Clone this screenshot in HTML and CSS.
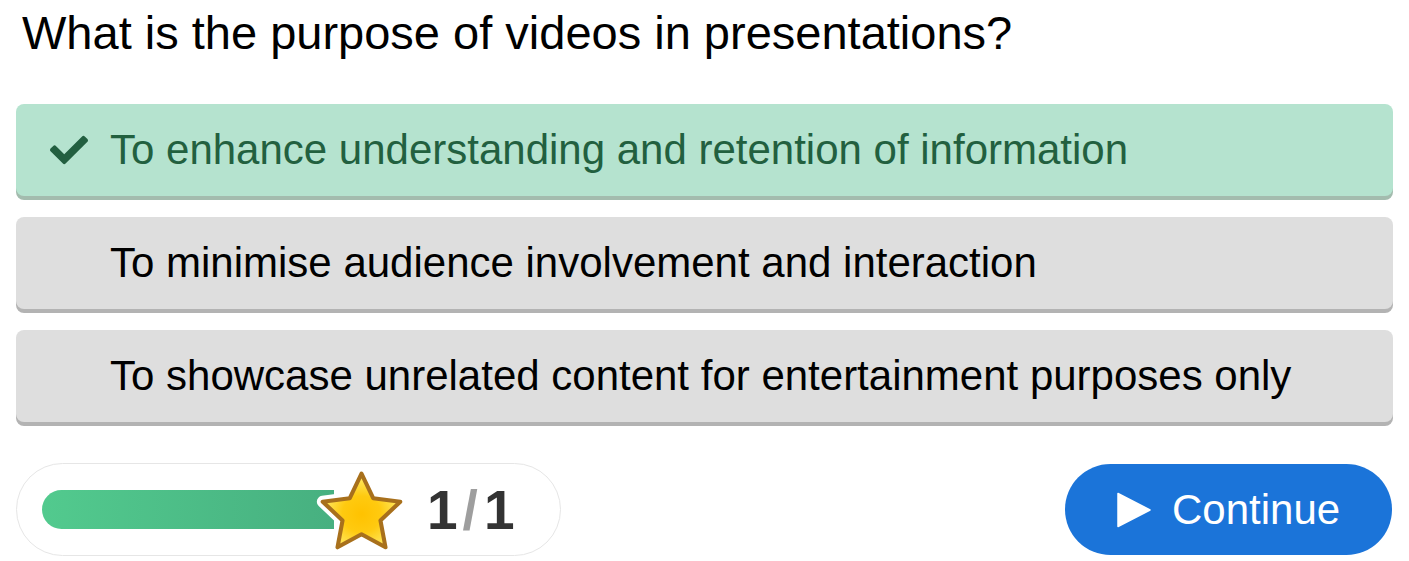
FILE: index.html
```html
<!DOCTYPE html>
<html lang="en">
<head>
<meta charset="utf-8">
<title>Quiz</title>
<link rel="stylesheet" href="styles.css">
</head>
<body>
<main class="page">
  <h1 class="question">What is the purpose of videos in presentations?</h1>
  <div class="options">
    <div class="option correct">
      <span class="opt-icon">
        <svg viewBox="0 0 512 512" width="38" height="38" aria-hidden="true"><path fill="#225f40" d="M173.898 439.404l-166.4-166.4c-9.997-9.997-9.997-26.206 0-36.204l36.203-36.204c9.997-9.998 26.207-9.998 36.204 0L192 312.69 432.095 72.596c9.997-9.997 26.207-9.997 36.204 0l36.203 36.204c9.997 9.997 9.997 26.206 0 36.204l-294.4 294.401c-9.998 9.997-26.207 9.997-36.204-.001z"/></svg>
      </span>
      <span class="opt-text">To enhance understanding and retention of information</span>
    </div>
    <div class="option">
      <span class="opt-icon"></span>
      <span class="opt-text">To minimise audience involvement and interaction</span>
    </div>
    <div class="option">
      <span class="opt-icon"></span>
      <span class="opt-text">To showcase unrelated content for entertainment purposes only</span>
    </div>
  </div>
  <div class="footer">
    <div class="progress">
      <div class="bar"><div class="bar-fill" style="width:100%"></div></div>
      <svg class="star" viewBox="0 0 100 96" width="91" height="87" aria-hidden="true">
        <defs>
          <radialGradient id="sg" cx="50%" cy="55%" r="55%">
            <stop offset="0" stop-color="#ffc200"/>
            <stop offset="0.45" stop-color="#ffca10"/>
            <stop offset="1" stop-color="#ffee70"/>
          </radialGradient>
        </defs>
        <g transform="translate(0,-2)">
          <polygon points="50,7 62.9,34.2 92.8,38.1 70.9,58.8 76.5,88.4 50,74 23.5,88.4 29.1,58.8 7.2,38.1 37.1,34.2" fill="#fff" stroke="#fff" stroke-width="13" stroke-linejoin="round"/>
          <polygon points="50,7 62.9,34.2 92.8,38.1 70.9,58.8 76.5,88.4 50,74 23.5,88.4 29.1,58.8 7.2,38.1 37.1,34.2" fill="url(#sg)" stroke="#a8701c" stroke-width="4.5" stroke-linejoin="round"/>
        </g>
      </svg>
      <span class="count">1<span class="slash">/</span>1</span>
    </div>
    <button class="continue" type="button">
      <svg viewBox="0 0 34 36" width="34" height="36" aria-hidden="true"><path d="M1 1.5 L33 18 L1 34.5 Z" fill="#fff" stroke="#fff" stroke-width="1.5" stroke-linejoin="round"/></svg>
      <span>Continue</span>
    </button>
  </div>
</main>
</body>
</html>
```

FILE: styles.css
```css
* { box-sizing: border-box; }
html, body { margin: 0; padding: 0; background: #fff; }
body {
  font-family: "Liberation Sans", Arial, sans-serif;
  color: #000;
}
.page {
  padding: 0 16px;
}
.question {
  margin: 6px 0 0 6px;
  font-size: 47px;
  font-weight: normal;
  line-height: 54px;
}
.options {
  margin-top: 44px;
  display: flex;
  flex-direction: column;
  gap: 21px;
}
.option {
  height: 92px;
  display: flex;
  align-items: center;
  padding: 0 24px 0 34px;
  background: #dedede;
  border-radius: 8px;
  box-shadow: 0 4px 0 #b3b3b3;
  font-size: 42px;
  color: #000;
}
.option.correct {
  background: #b5e3cf;
  box-shadow: 0 4px 0 #a3bcae;
  color: #22603f;
}
.opt-icon {
  width: 40px;
  margin-right: 20px;
  display: flex;
  align-items: center;
  justify-content: flex-start;
}
.opt-icon svg { display: block; }
.footer {
  margin-top: 41px;
  display: flex;
  justify-content: space-between;
  align-items: center;
}
.progress {
  width: 545px;
  height: 93px;
  border: 1px solid #e6e6e6;
  border-radius: 47px;
  display: flex;
  align-items: center;
  padding-left: 25px;
}
.bar {
  width: 292px;
  height: 39px;
  border-radius: 20px 0 0 20px;
  overflow: hidden;
}
.bar-fill {
  height: 100%;
  background: linear-gradient(90deg, #52ca8e, #47b080);
}
.star {
  display: block;
  margin-left: -18px;
  margin-top: 5px;
  flex: none;
}
.count {
  margin-left: 20px;
  font-size: 55px;
  font-weight: bold;
  color: #333;
}
.slash {
  display: inline-block;
  color: #9e9e9e;
  margin: 0 6px 0 5px;
}
.continue {
  width: 327px;
  height: 91px;
  margin-right: 1px;
  border: none;
  border-radius: 46px;
  background: #1b74d9;
  color: #fff;
  font-family: "Liberation Sans", Arial, sans-serif;
  font-size: 42px;
  display: flex;
  align-items: center;
  padding: 0 0 0 52px;
  gap: 21px;
}
.continue svg { display: block; }
```
